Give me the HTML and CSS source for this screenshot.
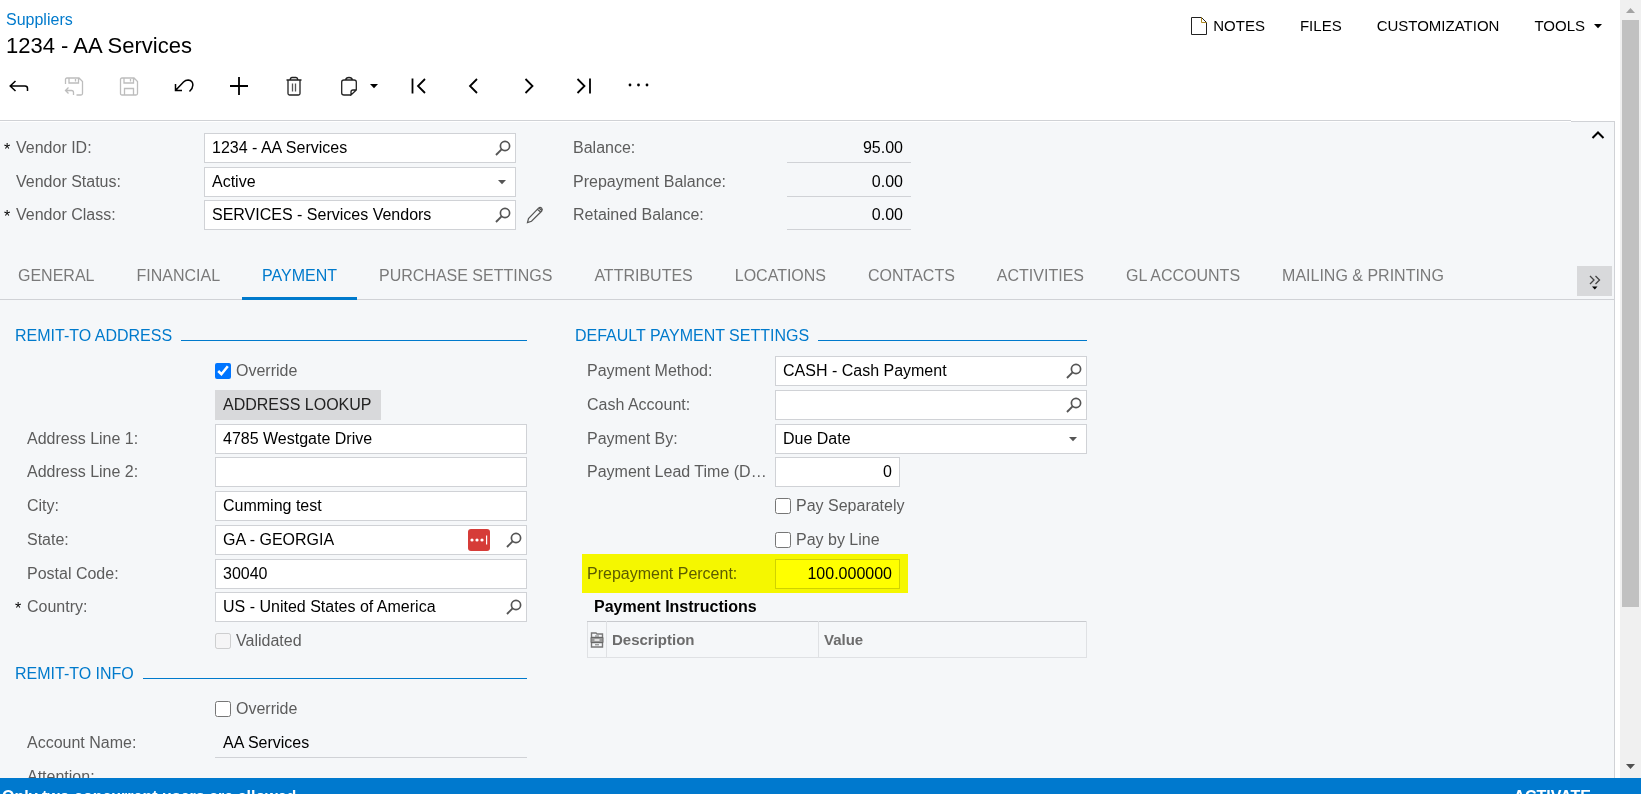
FILE: index.html
```html
<!DOCTYPE html>
<html lang="en">
<head>
<meta charset="utf-8">
<title>Suppliers</title>
<link rel="stylesheet" href="styles.css">
</head>
<body>
<svg class="defs" aria-hidden="true">
  <symbol id="lens" viewBox="0 0 16 16"><circle cx="10" cy="6" r="4.6" fill="none" stroke="#555" stroke-width="1.7"/><path d="M6.8 9.2L1 15" fill="none" stroke="#555" stroke-width="1.9"/></symbol>
  <symbol id="caret" viewBox="0 0 10 10"><path d="M1 3h8L5 7.200z" fill="currentColor"/></symbol>
</svg>
<div class="app">
  <div class="workspace">
    <main class="screen">
      <header class="header">
        <div class="heading">
          <a class="crumb" href="#">Suppliers</a>
          <h1 class="title">1234 - AA Services</h1>
        </div>
        <nav class="menu" aria-label="Screen menu">
          <button class="menu-item" type="button">
            <svg width="16" height="20" viewBox="0 0 16 20" fill="none" stroke="#222"><path d="M.5 1.500H10.500L15.500 6.500V18.500H.5z"/><path d="M10.500 1.500V6.500H15.500" stroke="#b08a20"/></svg>
            NOTES
          </button>
          <button class="menu-item" type="button">FILES</button>
          <button class="menu-item" type="button">CUSTOMIZATION</button>
          <button class="menu-item" type="button">TOOLS <svg class="caret" width="10" height="10"><use href="#caret"/></svg></button>
        </nav>
      </header>
      <div class="toolbar" role="toolbar" aria-label="Record actions">
        <button class="tool" type="button" aria-label="Back"><svg width="20" height="20" viewBox="0 0 20 20" fill="none" stroke="#000" stroke-width="1.500"><path d="M6.500 5L1.200 10L6.500 15M1.200 10H16Q18.500 10 18.500 12.500V15"/></svg></button>
        <button class="tool off" type="button" disabled aria-label="Save and close"><svg width="20" height="20" viewBox="0 0 20 20" fill="none" stroke="#bdbdbd" stroke-width="1.300"><path d="M1.500 8V3.500Q1.500 2 3 2H15L18.500 5.500V17.500Q18.500 19 17 19H12.500M5 2V7H14.500V2M11.500 3V5.500"/><path d="M4.500 11.500L1.500 14.500L4.500 17.500M1.500 14.500H7.500Q9.500 14.500 9.500 16.500V19"/></svg></button>
        <button class="tool off" type="button" disabled aria-label="Save"><svg width="20" height="20" viewBox="0 0 20 20" fill="none" stroke="#bdbdbd" stroke-width="1.300"><path d="M3 2H15L18.500 5.500V17.500Q18.500 19 17 19H3Q1.500 19 1.500 17.500V3.500Q1.500 2 3 2zM5 2V7H14.500V2M11.500 3V5.500M5.500 19V12.500H14.500V19"/></svg></button>
        <button class="tool" type="button" aria-label="Undo"><svg width="20" height="20" viewBox="0 0 20 20" fill="none" stroke="#000" stroke-width="1.500"><path d="M1.500 8V14.500H8M1.500 14.500L9.500 6Q11.500 4 14.200 4Q18.800 4.500 18.900 9Q18.800 12.500 15.500 15.500"/></svg></button>
        <button class="tool" type="button" aria-label="Add"><svg width="20" height="20" viewBox="0 0 20 20" fill="none" stroke="#000" stroke-width="1.800"><path d="M10 1V19M1 10H19"/></svg></button>
        <button class="tool" type="button" aria-label="Delete"><svg width="20" height="20" viewBox="0 0 20 20" fill="none" stroke="#222" stroke-width="1.300"><path d="M2.500 4H17.500M4 4V17.500Q4 19 5.500 19H14.500Q16 19 16 17.500V4M6 4Q6.500 1.500 8 1.500H12Q13.500 1.500 14 4"/><path stroke="#555" d="M8.500 7.500V15.500M11.500 7.500V15.500"/></svg></button>
        <button class="tool tool-wide" type="button" aria-label="Clipboard"><svg width="20" height="20" viewBox="0 0 20 20" fill="none" stroke="#222" stroke-width="1.300"><path d="M11.500 19H5Q2.700 19 2.700 17V6Q2.700 4 5 4H15Q17.300 4 17.300 6V14L12 19V16Q12 14 14 14H17.300M6.500 4Q7 1.500 10 1.500T13.500 4"/></svg><svg width="10" height="10"><use href="#caret"/></svg></button>
        <button class="tool" type="button" aria-label="First"><svg width="20" height="20" viewBox="0 0 20 20" fill="none" stroke="#000" stroke-width="1.800"><path d="M3.500 2.500V17.500M16 3L9 10L16 17"/></svg></button>
        <button class="tool" type="button" aria-label="Previous"><svg width="20" height="20" viewBox="0 0 20 20" fill="none" stroke="#000" stroke-width="1.800"><path d="M13 3L6 10L13 17"/></svg></button>
        <button class="tool" type="button" aria-label="Next"><svg width="20" height="20" viewBox="0 0 20 20" fill="none" stroke="#000" stroke-width="1.800"><path d="M6.500 3L13.500 10L6.500 17"/></svg></button>
        <button class="tool" type="button" aria-label="Last"><svg width="20" height="20" viewBox="0 0 20 20" fill="none" stroke="#000" stroke-width="1.800"><path d="M3.500 3L10.500 10L3.500 17M16 2.500V17.500"/></svg></button>
        <button class="tool" type="button" aria-label="More actions"><svg width="22" height="20" viewBox="0 0 22 20"><circle cx="2" cy="9" r="1.400"/><circle cx="10.500" cy="9" r="1.400"/><circle cx="19" cy="9" r="1.400"/></svg></button>
      </div>
      <div class="edge"><span class="edge-long"></span><span class="edge-short"></span></div>
      <div class="panel">
        <section class="summary" aria-label="Summary">
          <div class="rows">
            <div class="row">
              <span class="req">*</span><label for="vid">Vendor ID:</label>
              <div class="field"><input id="vid" type="text" value="1234 - AA Services"><button class="look" type="button" aria-label="Look up vendor"><svg width="16" height="16"><use href="#lens"/></svg></button></div>
            </div>
            <div class="row">
              <label for="vst">Vendor Status:</label>
              <div class="field"><select id="vst"><option>Active</option></select><svg class="arrow" width="10" height="10"><use href="#caret"/></svg></div>
            </div>
            <div class="row">
              <span class="req">*</span><label for="vcl">Vendor Class:</label>
              <div class="field"><input id="vcl" type="text" value="SERVICES - Services Vendors"><button class="look" type="button" aria-label="Look up class"><svg width="16" height="16"><use href="#lens"/></svg></button></div>
              <button class="edit" type="button" aria-label="Edit class"><svg width="18" height="18" viewBox="0 0 18 18" fill="none" stroke="#555" stroke-width="1.200"><path d="M1.500 16.500L2.500 12.500L12.500 2.200Q14 .8 15.500 2Q17 3.500 15.800 5L5.500 15.200zM11.500 3.200L14.800 6.200M13 2L16 4.800"/></svg></button>
            </div>
          </div>
          <div class="rows totals">
            <div class="row"><label for="bal">Balance:</label><input id="bal" class="plain num" type="text" readonly value="95.00"></div>
            <div class="row"><label for="pre">Prepayment Balance:</label><input id="pre" class="plain num" type="text" readonly value="0.00"></div>
            <div class="row"><label for="ret">Retained Balance:</label><input id="ret" class="plain num" type="text" readonly value="0.00"></div>
          </div>
          <button class="fold" type="button" aria-label="Collapse summary"><svg width="14" height="10" viewBox="0 0 14 10" fill="none" stroke="#000" stroke-width="2"><path d="M1.500 8L7 2.500L12.500 8"/></svg></button>
        </section>
        <div class="tabbar">
          <nav class="tabs" aria-label="Sections">
            <a class="tab" href="#">GENERAL</a>
            <a class="tab" href="#">FINANCIAL</a>
            <a class="tab current" href="#" aria-current="page">PAYMENT</a>
            <a class="tab" href="#">PURCHASE SETTINGS</a>
            <a class="tab" href="#">ATTRIBUTES</a>
            <a class="tab" href="#">LOCATIONS</a>
            <a class="tab" href="#">CONTACTS</a>
            <a class="tab" href="#">ACTIVITIES</a>
            <a class="tab" href="#">GL ACCOUNTS</a>
            <a class="tab" href="#">MAILING &amp; PRINTING</a>
          </nav>
          <button class="overflow" type="button" aria-label="More tabs"><svg width="14" height="18" viewBox="0 0 14 18" fill="none" stroke="#444" stroke-width="1.300"><path d="M2 4L6 8L2 12M7.500 4L11.500 8L7.500 12"/><path d="M4 14.500H9.500L6.800 17.500z" fill="#000" stroke="none"/></svg></button>
        </div>
        <div class="content">
          <div class="column">
            <h2 class="group">REMIT-TO ADDRESS</h2>
            <div class="rows">
              <div class="row"><label class="check"><input type="checkbox" checked>Override</label></div>
              <div class="row"><button class="push" type="button">ADDRESS LOOKUP</button></div>
              <div class="row"><label for="a1">Address Line 1:</label><div class="field"><input id="a1" type="text" value="4785 Westgate Drive"></div></div>
              <div class="row"><label for="a2">Address Line 2:</label><div class="field"><input id="a2" type="text"></div></div>
              <div class="row"><label for="city">City:</label><div class="field"><input id="city" type="text" value="Cumming test"></div></div>
              <div class="row"><label for="state">State:</label><div class="field"><input id="state" type="text" value="GA - GEORGIA"><button class="vault" type="button" aria-label="Fill from vault"><svg width="22" height="22" viewBox="0 0 22 22"><rect width="22" height="22" rx="3" fill="#d63c38"/><g fill="#fff"><circle cx="4" cy="11" r="1.600"/><circle cx="9" cy="11" r="1.600"/><circle cx="14" cy="11" r="1.600"/><rect x="18" y="6.500" width="1.200" height="9"/></g></svg></button><button class="look" type="button" aria-label="Look up state"><svg width="16" height="16"><use href="#lens"/></svg></button></div></div>
              <div class="row"><label for="zip">Postal Code:</label><div class="field"><input id="zip" type="text" value="30040"></div></div>
              <div class="row"><span class="req">*</span><label for="country">Country:</label><div class="field"><input id="country" type="text" value="US - United States of America"><button class="look" type="button" aria-label="Look up country"><svg width="16" height="16"><use href="#lens"/></svg></button></div></div>
              <div class="row"><label class="check"><input type="checkbox" disabled>Validated</label></div>
            </div>
            <h2 class="group">REMIT-TO INFO</h2>
            <div class="rows">
              <div class="row"><label class="check"><input type="checkbox">Override</label></div>
              <div class="row"><label for="acct">Account Name:</label><input id="acct" class="plain" type="text" readonly value="AA Services"></div>
              <div class="row"><label for="attn">Attention:</label><input id="attn" class="plain" type="text" readonly></div>
            </div>
          </div>
          <div class="column">
            <h2 class="group">DEFAULT PAYMENT SETTINGS</h2>
            <div class="rows">
              <div class="row"><label for="pm">Payment Method:</label><div class="field"><input id="pm" type="text" value="CASH - Cash Payment"><button class="look" type="button" aria-label="Look up method"><svg width="16" height="16"><use href="#lens"/></svg></button></div></div>
              <div class="row"><label for="ca">Cash Account:</label><div class="field"><input id="ca" type="text"><button class="look" type="button" aria-label="Look up account"><svg width="16" height="16"><use href="#lens"/></svg></button></div></div>
              <div class="row"><label for="pb">Payment By:</label><div class="field"><select id="pb"><option>Due Date</option></select><svg class="arrow" width="10" height="10"><use href="#caret"/></svg></div></div>
              <div class="row"><label for="lead">Payment Lead Time (Days):</label><div class="field short"><input id="lead" class="num" type="text" value="0"></div></div>
              <div class="row"><label class="check"><input type="checkbox">Pay Separately</label></div>
              <div class="row"><label class="check"><input type="checkbox">Pay by Line</label></div>
              <div class="row marked"><label for="pp">Prepayment Percent:</label><div class="field short"><input id="pp" class="num" type="text" value="100.000000"></div></div>
            </div>
            <h3 class="caption">Payment Instructions</h3>
            <table class="grid">
              <thead><tr>
                <th class="pick" scope="col" aria-label="Files"><svg width="14" height="16" viewBox="0 0 14 16" fill="none" stroke="#777" stroke-width="1.400"><path d="M1.500 5.500V1H6L7 2H12.500V5.500zM1.500 10.500V15H12.500V10.500z"/><path d="M1 5.500H13V10.500H1z" fill="#999" stroke="#666" stroke-width="1"/><path d="M5 4H9M5 12.800H9" stroke-width="1"/><path d="M4.500 8H9.500" stroke="#fff"/></svg></th>
                <th class="desc" scope="col">Description</th>
                <th scope="col">Value</th>
              </tr></thead>
            </table>
          </div>
        </div>
      </div>
    </main>
    <div class="scroll" aria-hidden="true">
      <svg width="21" height="20" viewBox="0 0 21 20"><path d="M10.500 8L15 13H6z" fill="#a3a3a3"/></svg>
      <div class="track"><div class="thumb"></div></div>
      <svg width="21" height="24" viewBox="0 0 21 24"><path d="M6 10H15L10.500 15z" fill="#505050"/></svg>
    </div>
  </div>
  <footer class="notice"><span>Only two concurrent users are allowed.</span><a href="#">ACTIVATE</a></footer>
</div>
</body>
</html>
```
FILE: styles.css
```css
* { box-sizing: border-box; }

body {
  margin: 0;
  overflow: hidden;
  background: #fff;
  color: #000;
  font: 16px/20px "Liberation Sans", Arial, sans-serif;
}

button, input, select { font: inherit; color: inherit; }
button { padding: 0; border: 0; background: none; }
a { color: inherit; text-decoration: none; }
svg { display: block; flex: none; }
.defs { position: absolute; width: 0; height: 0; }

.app { display: flex; flex-direction: column; height: 100vh; }
.workspace { display: flex; flex: 1; min-height: 0; }
.screen { display: flex; flex-direction: column; flex: 1; min-width: 0; overflow: hidden; }

.header { display: flex; justify-content: space-between; padding: 10px 17px 0 6px; }
.crumb { color: #007acc; }
.title { margin: 4px 0 0; font-size: 22px; line-height: 24px; font-weight: 400; }
.menu { display: flex; align-items: center; gap: 35px; height: 32px; font-size: 15px; }
.menu-item { display: flex; align-items: center; gap: 6px; }
.menu-item .caret { margin-left: 2px; }

.toolbar { display: flex; align-items: center; gap: 25px; padding: 12px 4px 19px; }
.tool { display: flex; align-items: center; justify-content: center; width: 30px; height: 31px; }
.tool-wide { width: 45px; gap: 10px; justify-content: flex-end; }

.edge { display: flex; height: 2px; margin-right: 5px; }
.edge-long { flex: 1; border-top: 1px solid #d0d2d6; }
.edge-short { width: 44px; border-bottom: 1px solid #d0d2d6; }

.panel { flex: 1; min-height: 0; margin-right: 5px; border-right: 1px solid #d0d2d6; background: #f5f7f9; }

.summary { display: flex; padding: 11px 9px 0 4px; height: 130px; }
.summary .row:nth-child(2) { height: 33px; }
.totals .row { grid-template-columns: 214px 124px; }
.totals .row label { grid-column: 1; }
.totals .row .plain { grid-column: 2; }
.fold { align-self: flex-start; margin: -3px 0 0 auto; }

.row {
  display: grid;
  grid-template-columns: 12px 188px 312px 57px;
  align-items: start;
  height: 34px;
}
.row label { grid-column: 2; overflow: hidden; padding: 5px 7px 5px 0; color: #5c5c5c; white-space: nowrap; text-overflow: ellipsis; }
.row .field, .row .plain, .row .push { grid-column: 3; }
.req { grid-column: 1; padding-top: 7px; }
.content .row { grid-template-columns: 12px 188px 312px; }
.content .row:nth-child(4n+3) { height: 33px; }

.field { display: flex; align-items: center; height: 30px; border: 1px solid #d0d2d6; background: #fff; }
.field input, .field select { flex: 1; min-width: 0; height: 28px; padding: 0 7px; border: 0; background: none; appearance: none; outline: 0; }
.short { width: 125px; }
.look { margin-right: 4px; }
.vault { margin-right: 16px; }
.arrow { margin-right: 8px; color: #555; pointer-events: none; }
.edit { grid-column: 4; padding: 6px 0 0 10px; }
.plain { width: 100%; height: 30px; padding: 0 8px; border: 0; border-bottom: 1px solid #d0d2d6; background: none; outline: 0; }
.field .num, .num { text-align: right; }

.row .check { grid-column: 3; display: flex; align-items: center; gap: 5px; }
.check input { width: 16px; height: 16px; margin: 0; accent-color: #0075ff; }
.push { justify-self: start; height: 30px; padding: 0 10px 0 8px; background: #d8d9db; color: #222; }

.marked { position: relative; }
.marked::before { content: ""; position: absolute; top: -5px; bottom: -1px; left: 7px; width: 326px; background: #ff0; mix-blend-mode: multiply; }

.tabbar { display: flex; align-items: flex-end; justify-content: space-between; height: 48px; padding-right: 2px; border-bottom: 1px solid #d0d2d6; }
.tabs { display: flex; gap: 2px; height: 48px; margin-bottom: -1px; }
.tab { padding: 14px 20px 0; color: #7a7a7a; white-space: nowrap; }
.tab:first-child { padding-left: 18px; }
.tab.current { border-bottom: 3px solid #007acc; color: #007acc; }
.overflow { display: flex; align-items: center; justify-content: center; width: 35px; height: 30px; margin-bottom: 3px; background: #d8d9db; }

.content { display: flex; gap: 48px; padding: 22px 15px 0; }
.column { width: 512px; }
.group { display: flex; align-items: baseline; gap: 9px; margin: 0; padding: 4px 0 10px; font-size: 16px; font-weight: 400; color: #007acc; }
.group::after { content: ""; flex: 1; margin-bottom: 1px; border-bottom: 1px solid #007acc; }

.caption { margin: 0; padding: 5px 0 4px 19px; font-size: 16px; }
.grid { width: 500px; margin-left: 12px; border-collapse: collapse; table-layout: fixed; border: 1px solid #d0d2d6; }
.grid th { height: 36px; padding: 0 5px; border: 1px solid #dfe1e4; border-top-color: #c8cace; text-align: left; font-size: 15px; color: #6c6c6c; }
.grid .pick { width: 19px; padding: 0 2px; }
.grid .desc { width: 212px; }

.scroll { display: flex; flex-direction: column; width: 21px; background: #f0f0f0; }
.track { flex: 1; padding: 0 2px; }
.thumb { height: 80%; background: #c1c1c1; }

.notice { display: flex; flex: 0 0 16px; justify-content: space-between; padding: 9px 50px 0 2px; overflow: hidden; background: #0079ce; color: #fff; font-weight: 700; }
```
